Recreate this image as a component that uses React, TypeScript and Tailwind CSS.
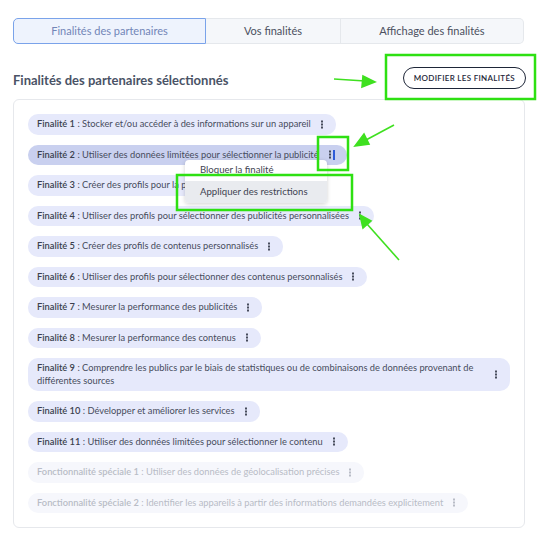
const items = [
  { label: "Finalité 1", text: "Stocker et/ou accéder à des informations sur un appareil" },
  { label: "Finalité 2", text: "Utiliser des données limitées pour sélectionner la publicité", active: true },
  { label: "Finalité 3", text: "Créer des profils pour la publicité personnalisée" },
  { label: "Finalité 4", text: "Utiliser des profils pour sélectionner des publicités personnalisées" },
  { label: "Finalité 5", text: "Créer des profils de contenus personnalisés" },
  { label: "Finalité 6", text: "Utiliser des profils pour sélectionner des contenus personnalisés" },
  { label: "Finalité 7", text: "Mesurer la performance des publicités" },
  { label: "Finalité 8", text: "Mesurer la performance des contenus" },
  {
    label: "Finalité 9",
    text: "Comprendre les publics par le biais de statistiques ou de combinaisons de données provenant de différentes sources",
  },
  { label: "Finalité 10", text: "Développer et améliorer les services" },
  { label: "Finalité 11", text: "Utiliser des données limitées pour sélectionner le contenu" },
  { label: "Fonctionnalité spéciale 1", text: "Utiliser des données de géolocalisation précises", disabled: true },
  {
    label: "Fonctionnalité spéciale 2",
    text: "Identifier les appareils à partir des informations demandées explicitement",
    disabled: true,
  },
];

function Dots({ focused }: { focused?: boolean }) {
  return (
    <span className="ml-[9px] flex items-center shrink-0">
      <svg width="4" height="9" viewBox="0 0 4 9" aria-hidden>
        <rect x="1" y="0.5" width="2" height="2" fill="currentColor" />
        <rect x="1" y="3.5" width="2" height="2" fill="currentColor" />
        <rect x="1" y="6.5" width="2" height="2" fill="currentColor" />
      </svg>
      {focused && <span className="ml-[1px] w-[2px] h-[10px] bg-[#2f5bd8]" />}
    </span>
  );
}

export default function App() {
  return (
    <div className="relative w-[546px] h-[547px] bg-white font-['Lato',sans-serif] overflow-hidden">
      <div className="w-[538px] pl-[13px] pt-[18px]">

        {/* ── Tabs ─────────────────────────────────────────────── */}
        <div className="flex w-[511px] h-[26px] text-[11px]">
          <div className="w-[193px] flex items-center justify-center rounded-l-[5px] border border-[#7aa3ea] bg-[#eef3fd] text-[#7286b8]">
            Finalités des partenaires
          </div>
          <div className="w-[135px] flex items-center justify-center border-y border-r border-[#e5e8ec] bg-[#f5f7fa] text-[#4b5060]">
            Vos finalités
          </div>
          <div className="flex-1 flex items-center justify-center rounded-r-[5px] border-y border-r border-[#e5e8ec] bg-[#f5f7fa] text-[#4b5060]">
            Affichage des finalités
          </div>
        </div>

        {/* ── Header ───────────────────────────────────────────── */}
        <div className="flex items-center justify-between w-[513px] mt-[23px]">
          <h2 className="mt-[5px] text-[13px] font-bold text-[#4a5366] leading-none">
            Finalités des partenaires sélectionnés
          </h2>
          <button className="h-[22px] px-[10px] rounded-full border border-[#1e2638] bg-white text-[8px] font-semibold tracking-[0.3px] text-[#1e2638]">
            MODIFIER LES FINALITÉS
          </button>
        </div>

        {/* ── Card ─────────────────────────────────────────────── */}
        <div className="mt-[10px] w-[512px] border border-[#e6e8ec] rounded-[6px] pl-[14px] pr-[14px] pt-[14px] pb-[14px]">
          <div className="flex flex-col items-start gap-[10px]">
            {items.map((it) => (
              <div
                key={it.label}
                className={
                  "flex items-center rounded-[10px] pl-[9px] pr-[12px] py-[4px] text-[9.3px] leading-[12.5px] " +
                  (it.active
                    ? "bg-[#c9d0ef] text-[#474c5c]"
                    : it.disabled
                    ? "bg-[#f6f7fc] text-[#b8bcc6]"
                    : "bg-[#e6e9fb] text-[#474c5c]")
                }
              >
                <span>
                  <span className={it.disabled ? "font-semibold" : "font-semibold text-[#3a3f4d]"}>{it.label}</span>
                  {" : "}
                  {it.text}
                </span>
                <Dots focused={it.active} />
              </div>
            ))}
          </div>
        </div>
      </div>

      {/* ── Dropdown menu ─────────────────────────────────────── */}
      <div className="absolute left-[185px] top-[160px] w-[142px] rounded-[4px] bg-white shadow-[0_1px_4px_rgba(0,0,0,0.18)] text-[9.6px] text-[#3f4452] overflow-hidden">
        <div className="h-[21px] flex items-center pl-[15px]">Bloquer la finalité</div>
        <div className="h-[22px] flex items-center pl-[15px] bg-[#e9ebef]">Appliquer des restrictions</div>
      </div>

      {/* ── Annotations ───────────────────────────────────────── */}
      <svg className="absolute inset-0 pointer-events-none" width="546" height="547" viewBox="0 0 546 547" aria-hidden>
        <g fill="none" stroke="#2ee012" strokeWidth="2.5">
          <rect x="386" y="55" width="149" height="44" />
          <rect x="318" y="137" width="30" height="33" />
          <rect x="177" y="175" width="175" height="35" />
        </g>
        <g stroke="#3fe020" strokeWidth="1.6" fill="#3fe020">
          <line x1="334" y1="79" x2="365" y2="81" />
          <polygon points="375,82 363,76 362,87" />
          <line x1="394" y1="125" x2="366" y2="140" />
          <polygon points="355,146 364,134 369,144" />
          <line x1="399" y1="260" x2="367" y2="224" />
          <polygon points="360,215 371,221 363,228" />
        </g>
      </svg>
    </div>
  );
}
